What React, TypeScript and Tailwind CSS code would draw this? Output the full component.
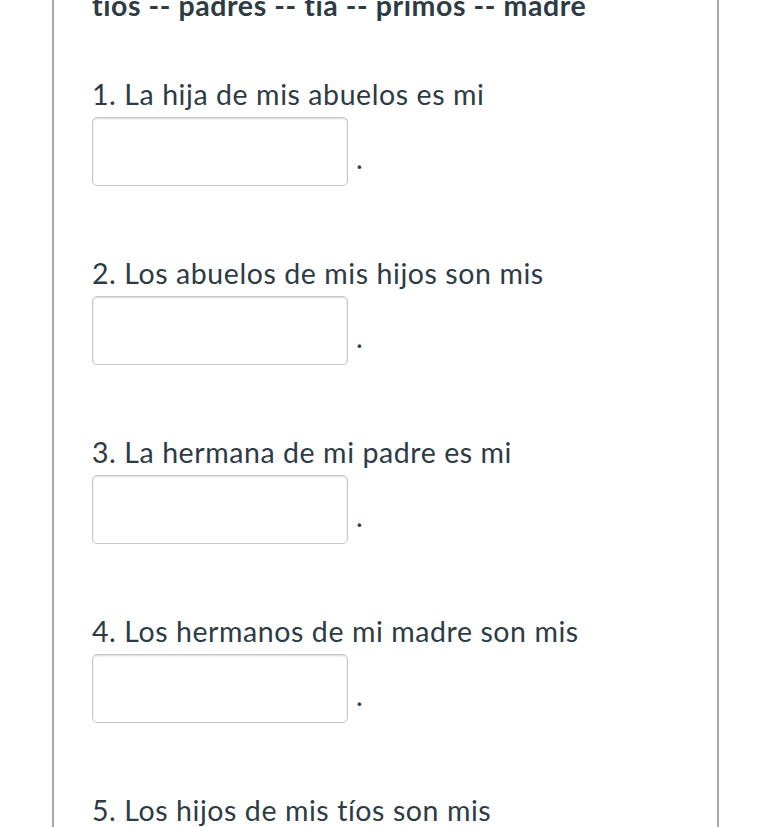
import React from "react";

const questions = [
  "1. La hija de mis abuelos es mi",
  "2. Los abuelos de mis hijos son mis",
  "3. La hermana de mi padre es mi",
  "4. Los hermanos de mi madre son mis",
  "5. Los hijos de mis tíos son mis",
];

export default function App() {
  return (
    <div className="w-[772px] h-[827px] overflow-hidden bg-white" style={{ fontFamily: "Lato, 'Noto Sans', sans-serif" }}>
      <div className="ml-[52px] w-[667px] min-h-[900px] border-l-2 border-r-2 border-[#a8a8a8] -mt-[13px] pl-[38px] text-[#2d3b45] tracking-[0.58px]">
        <div className="text-[28.5px] font-bold leading-[36px]">tíos -- padres -- tía -- primos -- madre</div>
        <div className="flex flex-col gap-[69px] mt-[53px]">
          {questions.map((q, i) => (
            <div key={i}>
              <div className="text-[28.5px] leading-[36px]">{q}</div>
              <div className="flex items-end mt-[5px]">
                <div className="w-[256px] h-[69px] rounded-[5px] border border-[#c2c8cc] bg-white shadow-[inset_0_1px_2px_rgba(0,0,0,0.15)]" />
                <span className="text-[28.5px] leading-[36px] ml-[8px] mb-[10px]">.</span>
              </div>
            </div>
          ))}
        </div>
      </div>
    </div>
  );
}
